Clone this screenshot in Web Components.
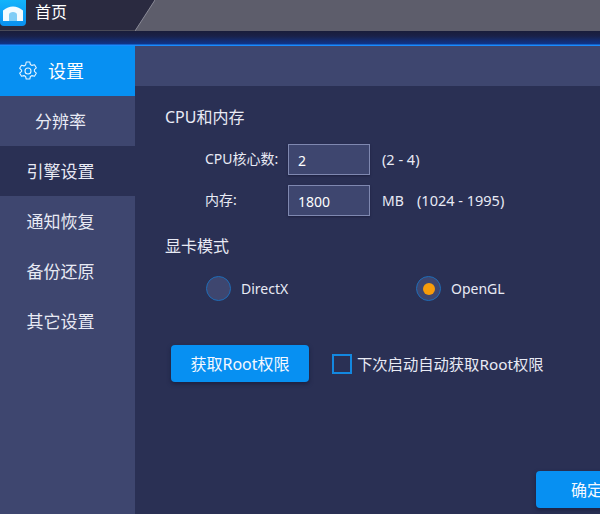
<!DOCTYPE html>
<html>
<head>
<meta charset="utf-8">
<style>
  html, body { margin: 0; padding: 0; }
  body {
    width: 600px;
    height: 514px;
    overflow: hidden;
    background: #2a3054;
    font-family: "Noto Sans", "Noto Sans CJK SC", sans-serif;
    color: #eef0f8;
  }
</style>
</head>
<body>
<app-titlebar>首页</app-titlebar>
<settings-window>
  <side-menu slot="side">
    <menu-item active>
      <svg slot="icon" width="20" height="20" viewBox="0 0 20 20" fill="none" stroke="#e6f4ff" stroke-width="1.1" stroke-linejoin="round">
        <path d="M8.200 1h3.600l.6 2.500 1.600.9 2.500-.7 1.800 3.100-1.900 1.800v1.800l1.900 1.800-1.800 3.100-2.500-.7-1.600.9-.6 2.500H8.200l-.6-2.500-1.600-.9-2.500.7-1.800-3.100 1.900-1.800V9.100L1.700 7.300l1.800-3.100 2.500.7 1.600-.9z"/>
        <circle cx="10" cy="10" r="3"/>
      </svg>
      设置
    </menu-item>
    <menu-item light>分辨率</menu-item>
    <menu-item current>引擎设置</menu-item>
    <menu-item>通知恢复</menu-item>
    <menu-item>备份还原</menu-item>
    <menu-item>其它设置</menu-item>
  </side-menu>

  <section-title>CPU和内存</section-title>
  <field-row label="CPU核心数:" value="2" hint="(2 - 4)"></field-row>
  <field-row label="内存:" value="1800" unit="MB" hint="(1024 - 1995)"></field-row>
  <section-title second>显卡模式</section-title>
  <radio-group>
    <radio-option>DirectX</radio-option>
    <radio-option checked>OpenGL</radio-option>
  </radio-group>
  <root-row>
    <blue-button>获取Root权限</blue-button>
    <check-option>下次启动自动获取Root权限</check-option>
  </root-row>
  <footer-bar><blue-button wide>确定</blue-button></footer-bar>
</settings-window>

<script>
// small helper, every element is just a shadow root with static markup
function define(name, html) {
  customElements.define(name, class extends HTMLElement {
    constructor() {
      super();
      this.attachShadow({ mode: "open" }).innerHTML = html;
    }
  });
}

define("app-titlebar", /*html*/ `
  <style>
    :host {
      display: block;
      height: 46px;
      background: linear-gradient(#191d3b 31px, #1a2148 36px, #10348a 44px, #1a8cff 45px, #1a8cff 46px);
    }
    .bar {
      display: flex;
      height: 31px;
      background: #2a2a40;
      box-shadow: inset 0 -1px 0 #4a4a58;
    }
    .logo {
      width: 26px;
      height: 26px;
      flex: none;
      display: flex;
      align-items: center;
      justify-content: center;
      background: linear-gradient(#12b4fb, #0a90f0);
      border-radius: 0 0 4px 4px;
    }
    .name {
      margin-left: 9px;
      width: 100px;
      height: 25px;
      line-height: 25px;
      font-size: 16px;
      color: #fff;
    }
    svg { flex: none; display: block; }
    .tab {
      flex: 1;
      background: #5d5d6b;
    }
  </style>
  <div class="bar">
    <div class="logo">
      <svg width="20" height="15" viewBox="0 0 20 15">
        <path d="M0 4.500C3.500 2 6.500 .5 10 .5s6.500 1.500 10 4V15H0z" fill="#f2fbff"/>
        <path d="M6 15V8.500C6 7 8 6 10 6s4 1 4 2.500V15z" fill="#7fcdf6"/>
      </svg>
    </div>
    <div class="name"><slot></slot></div>
    <svg width="20" height="31" viewBox="0 0 20 31">
      <path d="M0 31 20 0V31z" fill="#5d5d6b"/>
      <path d="M0 31 20 0" stroke="#8b8b98" stroke-width="1" fill="none"/>
    </svg>
    <div class="tab"></div>
  </div>
`);

define("settings-window", /*html*/ `
  <style>
    :host {
      display: grid;
      grid-template-columns: 135px 1fr;
      height: 468px;
    }
    .main {
      display: flex;
      flex-direction: column;
      min-width: 0;
    }
    .band {
      height: 40px;
      flex: none;
      background: #3e466f;
    }
    .body {
      flex: 1;
      display: flex;
      flex-direction: column;
      padding: 20px 0 0 30px;
      background: #2a3054;
    }
  </style>
  <slot name="side"></slot>
  <div class="main">
    <div class="band"></div>
    <div class="body"><slot></slot></div>
  </div>
`);

define("side-menu", /*html*/ `
  <style>
    :host {
      display: flex;
      flex-direction: column;
      background: #3e466f;
    }
  </style>
  <slot></slot>
`);

define("menu-item", /*html*/ `
  <style>
    :host {
      display: flex;
      align-items: center;
      justify-content: center;
      box-sizing: border-box;
      height: 50px;
      padding: 0 14px 2px 0;
      font-size: 17px;
      color: #e8eaf4;
    }
    :host([current]) { background: #2a3054; }
    :host([active]) {
      justify-content: flex-start;
      gap: 10px;
      padding: 0 0 2px 18px;
      background: #0790f2;
      color: #fff;
      font-size: 18px;
    }
    ::slotted(svg) { flex: none; margin-top: 2px; }
  </style>
  <slot name="icon"></slot><slot></slot>
`);

define("section-title", /*html*/ `
  <style>
    :host {
      display: block;
      height: 22px;
      line-height: 22px;
      font-size: 16px;
      color: #e8eaf4;
      margin-bottom: 16px;
    }
    :host([second]) { margin: 9px 0 19px; }
  </style>
  <slot></slot>
`);

customElements.define("field-row", class extends HTMLElement {
  constructor() {
    super();
    this.attachShadow({ mode: "open" });
  }
  connectedCallback() {
    const label = this.getAttribute("label");
    const value = this.getAttribute("value");
    const unit = this.getAttribute("unit");
    const hint = this.getAttribute("hint");
    this.shadowRoot.innerHTML = /*html*/ `
      <style>
        :host {
          display: flex;
          align-items: center;
          height: 31px;
          margin: 0 0 10px 40px;
          font-size: 14px;
          color: #e8eaf4;
        }
        .label { width: 83px; flex: none; position: relative; top: -2px; white-space: nowrap; }
        .box {
          box-sizing: border-box;
          width: 82px;
          height: 31px;
          padding-left: 9px;
          line-height: 31px;
          flex: none;
          font-size: 14px;
          color: #fff;
          background: #3e466f;
          border: 1px solid #7f88b0;
          box-shadow: 0 1px 2px #1c2040;
        }
        .unit { margin-left: 12px; font-size: 14px; width: 35px; }
        .hint { margin-left: 12px; font-size: 14.500px; position: relative; top: -1px; }
        .unit + .hint { margin-left: 0; }
      </style>
      <span class="label">${label}</span>
      <span class="box">${value}</span>
      ${unit ? `<span class="unit">${unit}</span>` : ""}
      <span class="hint">${hint}</span>
    `;
  }
});

define("radio-group", /*html*/ `
  <style>
    :host {
      display: grid;
      grid-template-columns: 210px 1fr;
      margin-left: 41px;
    }
  </style>
  <slot></slot>
`);

define("radio-option", /*html*/ `
  <style>
    :host {
      display: flex;
      align-items: center;
      gap: 10px;
      height: 25px;
      font-size: 14px;
      color: #e8eaf4;
    }
    .dot {
      box-sizing: border-box;
      width: 25px;
      height: 25px;
      display: flex;
      align-items: center;
      justify-content: center;
      border-radius: 50%;
      background: #3e466f;
      border: 1.500px solid #1e6cb8;
    }
    :host([checked]) .dot::after {
      content: "";
      width: 12px;
      height: 12px;
      border-radius: 50%;
      background: #f89c0a;
    }
  </style>
  <span class="dot"></span><slot></slot>
`);

define("root-row", /*html*/ `
  <style>
    :host {
      display: flex;
      align-items: center;
      gap: 23px;
      margin: 44px 0 0 6px;
    }
  </style>
  <slot></slot>
`);

define("blue-button", /*html*/ `
  <style>
    :host {
      display: flex;
      align-items: center;
      justify-content: center;
      box-sizing: border-box;
      width: 138px;
      height: 37px;
      padding-bottom: 2px;
      font-size: 16px;
      color: #f4f8ff;
      background: #0790f2;
      border-radius: 4px;
      box-shadow: 0 2px 4px #1c2040;
      white-space: nowrap;
    }
    :host([wide]) { width: 102px; flex: none; }
  </style>
  <slot></slot>
`);

define("check-option", /*html*/ `
  <style>
    :host {
      display: flex;
      align-items: center;
      gap: 5px;
      font-size: 15.300px;
      color: #e8eaf4;
      white-space: nowrap;
    }
    .box {
      box-sizing: border-box;
      width: 20px;
      height: 20px;
      flex: none;
      border: 2px solid #1388e0;
    }
    .text { margin-bottom: 2px; }
  </style>
  <span class="box"></span><span class="text"><slot></slot></span>
`);

define("footer-bar", /*html*/ `
  <style>
    :host {
      display: flex;
      margin: 89px 0 0 371px;
    }
  </style>
  <slot></slot>
`);
</script>
</body>
</html>
